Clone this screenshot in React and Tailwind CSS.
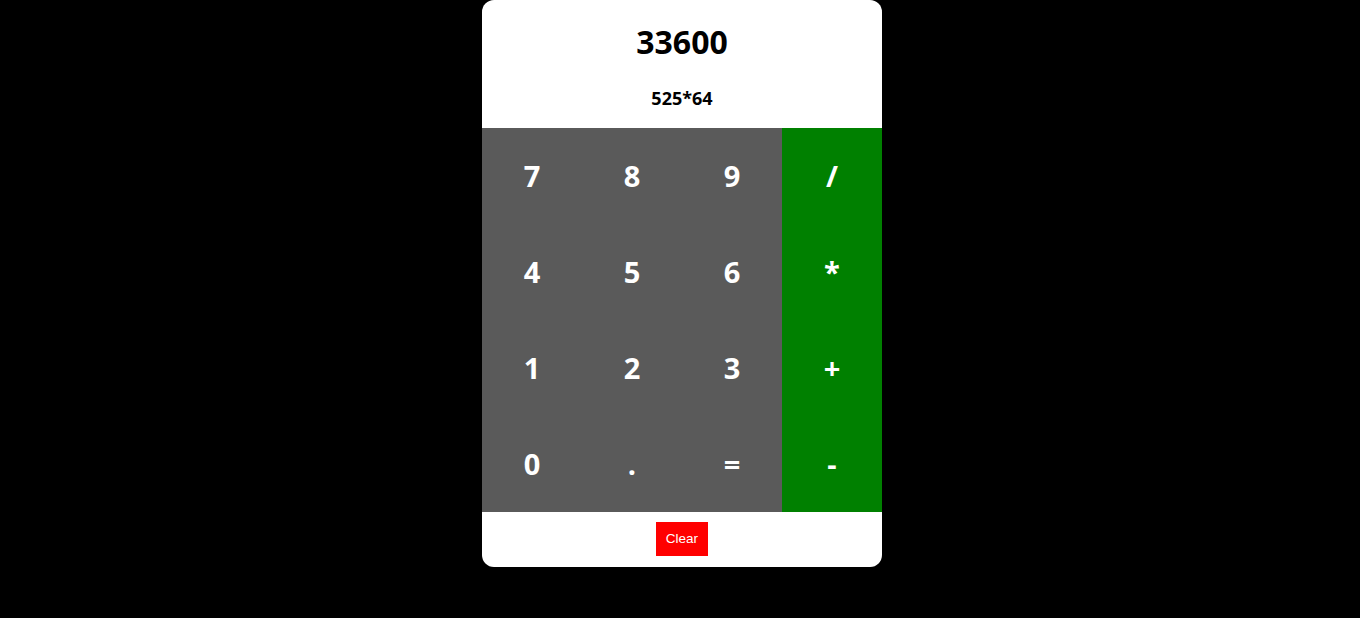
import React from "react";

const rows = [
  ["7", "8", "9", "/"],
  ["4", "5", "6", "*"],
  ["1", "2", "3", "+"],
  ["0", ".", "=", "-"],
];

export default function App() {
  return (
    <div className="min-h-[618px] w-full bg-black flex justify-center pl-[4px]" style={{ fontFamily: '"Open Sans", sans-serif' }}>
      <div className="w-[400px] h-[567px] bg-white rounded-xl overflow-hidden flex flex-col">
        <div className="h-[128px] flex flex-col items-center">
          <div className="h-[84px] flex items-center justify-center text-[32px] font-bold text-black">33600</div>
          <div className="h-[28px] flex items-center justify-center text-[18px] font-bold text-black">525*64</div>
        </div>
        <div className="grid grid-cols-4">
          {rows.flat().map((k, i) => (
            <div
              key={i}
              className={`h-[96px] flex items-center justify-center text-[29px] font-bold text-white ${i % 4 === 3 ? "bg-[#008000]" : "bg-[#5a5a5a]"}`}
            >
              {k}
            </div>
          ))}
        </div>
        <div className="flex justify-center pt-[10px]">
          <button className="w-[52px] h-[34px] bg-[#ff0000] text-white text-[13.5px]" style={{ fontFamily: '"Liberation Sans", Arial, sans-serif' }}>
            Clear
          </button>
        </div>
      </div>
    </div>
  );
}
